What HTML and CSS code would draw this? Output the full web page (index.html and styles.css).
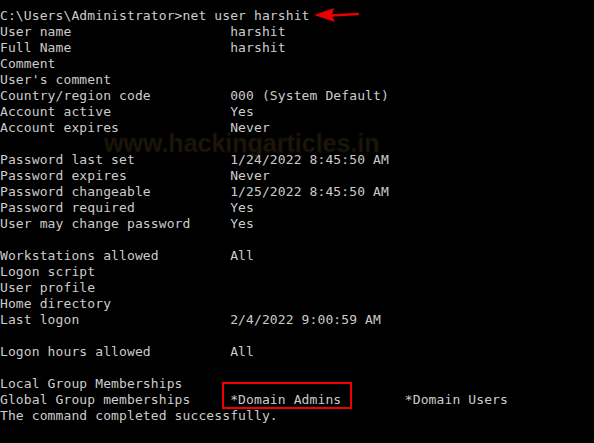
FILE: index.html
```html
<!DOCTYPE html>
<html>
<head>
<meta charset="utf-8">
<link rel="stylesheet" href="styles.css">
</head>
<body>
<div class="console">
<div class="watermark">www.hackingarticles.in</div>
<pre class="output">C:\Users\Administrator&gt;net user harshit
User name                    harshit
Full Name                    harshit
Comment
User's comment
Country/region code          000 (System Default)
Account active               Yes
Account expires              Never

Password last set            1/24/2022 8:45:50 AM
Password expires             Never
Password changeable          1/25/2022 8:45:50 AM
Password required            Yes
User may change password     Yes

Workstations allowed         All
Logon script
User profile
Home directory
Last logon                   2/4/2022 9:00:59 AM

Logon hours allowed          All

Local Group Memberships
Global Group memberships     *Domain Admins        *Domain Users
The command completed successfully.</pre>
<div class="highlight"></div>
<svg class="arrow" width="50" height="20" viewBox="0 0 50 20">
  <path d="M2 9 L22 2 L20 9 L23 16 Z" fill="#e60000"/>
  <path d="M19 9.5 L46 8" stroke="#e60000" stroke-width="2.4" stroke-linecap="round"/>
</svg>
</div>
</body>
</html>
```
FILE: styles.css
```css
html, body {
  margin: 0;
  padding: 0;
  background: #000000;
}
.console {
  position: relative;
  width: 594px;
  height: 443px;
  overflow: hidden;
  background: #000000;
}
.output {
  position: relative;
  margin: 0;
  padding: 8px 0 0 0;
  font-family: "DejaVu Sans Mono", "Liberation Mono", monospace;
  font-size: 13px;
  letter-spacing: 0.11px;
  line-height: 16px;
  color: #cccccc;
  white-space: pre;
}
.watermark {
  position: absolute;
  left: 104px;
  top: 129px;
  font-family: "Liberation Sans", Arial, sans-serif;
  font-weight: bold;
  font-size: 25px;
  color: #1e180a;
  -webkit-text-stroke: 1px #0d0b05;
  letter-spacing: 0px;
}
.highlight {
  position: absolute;
  left: 222px;
  top: 382px;
  width: 126px;
  height: 23px;
  border: 2px solid #f00000;
}
.arrow {
  position: absolute;
  left: 312px;
  top: 6px;
}
```
